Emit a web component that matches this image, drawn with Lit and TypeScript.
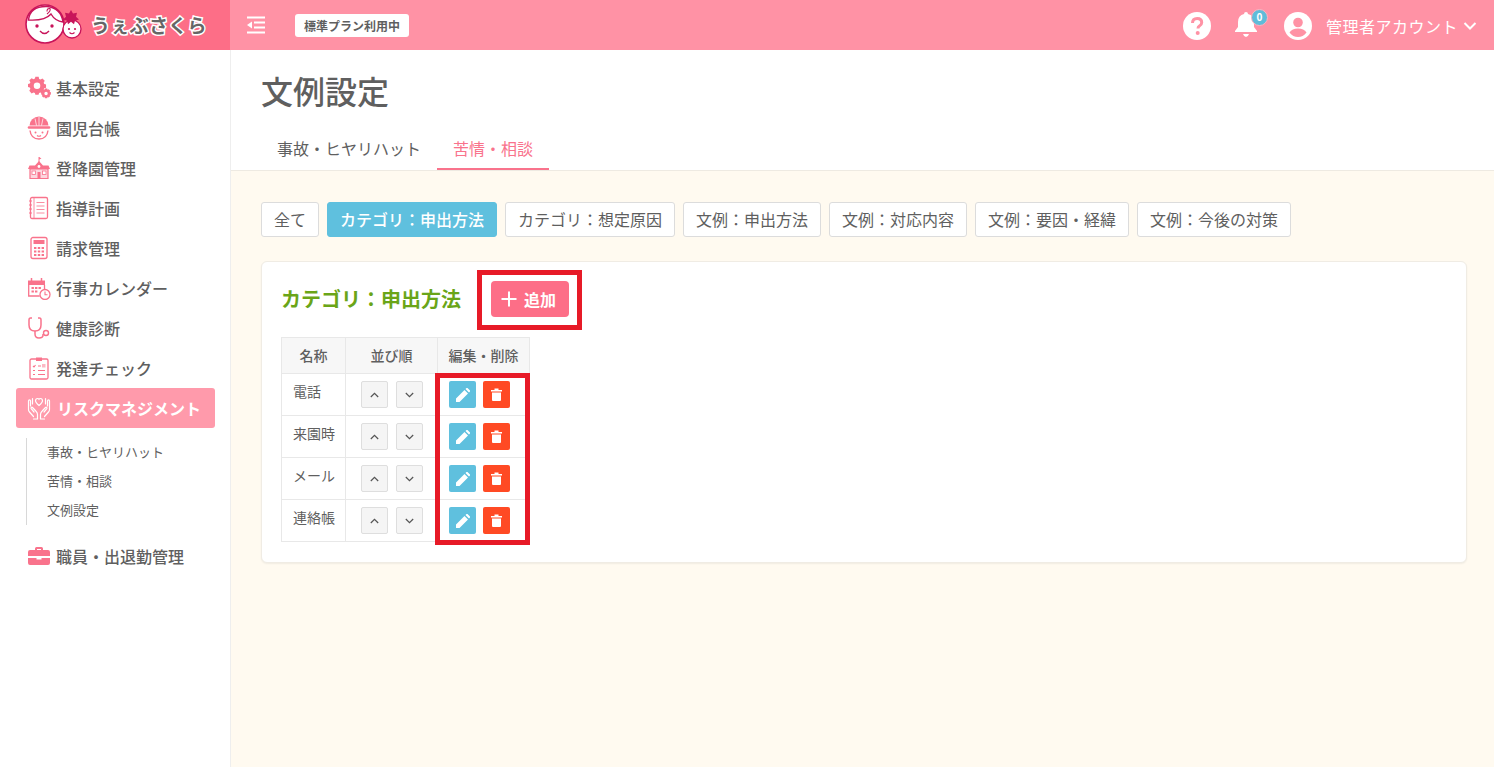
import { LitElement, html, css, svg } from "lit";
import { customElement } from "lit/decorators.js";

const P = "#f9738c";
const C = "\uFF1A";
const ic: Record<string, unknown> = {
  gear: svg`<path fill="${P}" fill-rule="evenodd" d="M9 1h4l.6 2.6 1.7.7L17.6 3l2.8 2.8-1.3 2.3.7 1.7 2.2.6v4l-2.3.6-.7 1.7 1.3 2.3-2.8 2.4-2.3-1.3-1.7.7-.6 2.2H9l-.6-2.2-1.7-.7-2.3 1.3L1.6 18l1.3-2.3-.7-1.7L0 13.4v-3.6l2.2-.6.7-1.7L1.6 5.2 4.4 2.6l2.3 1.3 1.7-.7L9 1zm2 7a4 4 0 100 8 4 4 0 000-8z" transform="translate(1 0) scale(.82)"/><path fill="${P}" fill-rule="evenodd" d="M18.2 15h2.6l.4 1.4 1.2-.7 1.8 1.8-.7 1.2 1.4.4v2.6l-1.4.4.7 1.2-1.8 1.8-1.2-.7-.4 1.4h-2.6l-.4-1.4-1.2.7-1.8-1.8.7-1.2-1.4-.4v-2.6l1.4-.4-.7-1.2 1.8-1.8 1.2.7zm1.3 3.6a1.9 1.9 0 100 3.8 1.9 1.9 0 000-3.8z" transform="translate(1.5 -1) scale(.9)"/>`,
  kid: svg`<path fill="${P}" d="M2.500 9.500a9.500 9 0 0119 0z"/><path d="M2 11.500h20" stroke="${P}" stroke-width="2.600" stroke-linecap="round"/><path d="M3 14.500Q4 23 12 23t9-8.500" fill="none" stroke="${P}" stroke-width="1.400"/><circle cx="8.500" cy="16.500" r="1" fill="${P}"/><circle cx="15.500" cy="16.500" r="1" fill="${P}"/><path d="M10 19.500q2 1.500 4 0" fill="none" stroke="${P}" stroke-width="1.200"/><path d="M12 1v8.500M8 2.500 9.500 9.500M16 2.500 14.500 9.500" stroke="#fff" stroke-width=".7"/>`,
  school: svg`<path d="M12 1v5" stroke="${P}" stroke-width="1"/><path fill="${P}" d="M12 1l2.500 1.500L12 3.500zM12 5l4 4.500h5.500L23 13H1l1.500-3.500H8z"/><path d="M3 13h18v9.500H3z" fill="#fdd6de" stroke="${P}" stroke-width="1.200"/><rect x="5" y="15" width="3.500" height="3.500" fill="#fff" stroke="${P}" stroke-width=".8"/><rect x="15.500" y="15" width="3.500" height="3.500" fill="#fff" stroke="${P}" stroke-width=".8"/><rect x="10.500" y="16" width="3" height="6.500" fill="${P}"/><circle cx="12" cy="10.500" r="1.400" fill="#fff"/>`,
  note: svg`<rect x="3.500" y="1.500" width="17" height="21" rx="1.500" fill="none" stroke="${P}" stroke-width="1.300"/><path d="M7 1.500v21M9.500 6.500h8M9.500 10h8M9.500 13.500h8M9.500 17h8" stroke="${P}" stroke-width="1" opacity=".8"/><path d="M2 5h3M2 9h3M2 13h3M2 17h3" stroke="${P}" stroke-width="1.200"/>`,
  calc: svg`<rect x="4" y="1.500" width="16" height="21" rx="2" fill="none" stroke="${P}" stroke-width="1.300"/><rect x="6.500" y="4" width="11" height="4" fill="${P}"/><path fill="${P}" d="M7 11h2.400v2H7zm3.800 0h2.400v2h-2.400zm3.800 0H17v2h-2.400zM7 14.500h2.400v2H7zm3.800 0h2.400v2h-2.400zm3.800 0H17v2h-2.400zM7 18h2.400v2H7zm3.800 0h2.400v2h-2.400zm3.800 0H17v2h-2.400z"/>`,
  cal: svg`<path fill="${P}" d="M1 4.500h17V9H1z"/><path d="M4.500 2v4M14.500 2v4" stroke="${P}" stroke-width="1.500"/><path d="M1.700 9v11h11" fill="none" stroke="${P}" stroke-width="1.300"/><path d="M17.500 9v4" stroke="${P}" stroke-width="1.300"/><path fill="${P}" d="M4.500 11h2.400v2H4.500zm3.500 0h2.400v2H8zm3.500 0h2.400v2h-2.400zM4.500 14.500h2.400v2H4.500zM8 14.500h2.400v2H8z"/><circle cx="18" cy="18.500" r="5" fill="#fff" stroke="${P}" stroke-width="1.300"/><path d="M18 15.500v3.200h2.500" fill="none" stroke="${P}" stroke-width="1.100"/>`,
  steth: svg`<path d="M5 2H3.500Q2 2 2 4v5q0 6 6 6t6-6V4q0-2-1.500-2H11" fill="none" stroke="${P}" stroke-width="1.500"/><path d="M8 15v3q0 4 4 4t4-3v-1" fill="none" stroke="${P}" stroke-width="1.500"/><circle cx="19" cy="17" r="2.500" fill="none" stroke="${P}" stroke-width="1.400"/>`,
  check: svg`<rect x="3" y="3" width="18" height="20" rx="1.500" fill="none" stroke="${P}" stroke-width="1.300"/><path fill="${P}" d="M9 1.500h6V5H9z"/><path d="M6 10l1 1 1.500-2M6 14.500h2M6 18.500h2M11 10h3M11 14.500h7M11 18.500h7" fill="none" stroke="${P}" stroke-width="1.100"/><rect x="15" y="8" width="3.500" height="3.500" fill="${P}" opacity=".5"/>`,
  hands: svg`<path d="M12 9.500C9.800 7.700 8.500 6.500 8.500 4.800 8.500 3.500 9.500 2.500 10.600 2.500c.6 0 1.100.3 1.400.8.300-.5.800-.8 1.400-.8 1.100 0 2.100 1 2.100 2.300 0 1.700-1.300 2.900-3.500 4.700z" fill="none" stroke="#fff" stroke-width="1.200"/><g fill="none" stroke="#fff" stroke-width="1.200" stroke-linejoin="round" stroke-linecap="round"><path d="M10.500 23v-4.500c0-1.500-.7-2.500-1.700-3.500L5.500 11.500c-.8-.8-2 .2-1.300 1.200L7 16M6.500 20.500 2.500 16c-.7-.7-1-1.500-1-2.500V5c0-1.500 2-1.500 2 0v5M6.500 23h4M5.500 8V2.500"/><path d="M13.500 23v-4.500c0-1.500.7-2.500 1.700-3.500l3.300-3.500c.8-.8 2 .2 1.300 1.200L17 16M17.500 20.500l4-4.500c.7-.7 1-1.500 1-2.500V5c0-1.500-2-1.500-2 0v5M17.500 23h-4M18.500 8V2.500"/></g>`,
  case: svg`<path fill="${P}" d="M8 6V4.500Q8 3 9.500 3h5Q16 3 16 4.500V6h5q2 0 2 2v4H1V8q0-2 2-2zm2 0h4V5h-4zM1 14h8.500v1.500h5V14H23v5q0 2-2 2H3q-2 0-2-2z"/>`,
};

const menu: [string, string][] = [
  ["gear", "基本設定"], ["kid", "園児台帳"], ["school", "登降園管理"], ["note", "指導計画"],
  ["calc", "請求管理"], ["cal", "行事カレンダー"], ["steth", "健康診断"], ["check", "発達チェック"],
];
const filters = ["全て", `カテゴリ${C}申出方法`, `カテゴリ${C}想定原因`, `文例${C}申出方法`, `文例${C}対応内容`, `文例${C}要因・経緯`, `文例${C}今後の対策`];
const rows = ["電話", "来園時", "メール", "連絡帳"];

@customElement("app-root")
export class AppRoot extends LitElement {
  static styles = css`
    :host { display: block; width: 1494px; height: 767px; overflow: hidden; background: #fff; color: #5f5f5f;
      font-family: "Noto Sans CJK JP", "Noto Sans", sans-serif; font-size: 16px; line-height: 1.5; }
    * { box-sizing: border-box; }
    svg { display: block; flex: none; }
    .top { height: 50px; display: flex; align-items: center; background: #ff92a5; color: #fff; }
    .brand { width: 230px; height: 50px; background: #fd6e87; display: flex; align-items: center; padding-left: 25px; gap: 4px; flex: none; }
    .logotext { font-size: 19px; font-weight: 700; letter-spacing: .3px; color: #666; -webkit-text-stroke: 3px #fff; paint-order: stroke fill; line-height: 50px; white-space: nowrap; }
    .toggle { margin-left: 15px; }
    .plan { margin: 1px 0 0 30px; background: #fff; color: #5f5f5f; font-size: 12px; font-weight: 700; height: 23px; line-height: 23px; padding: 0 9px; border-radius: 3px; }
    .right { margin-left: auto; display: flex; align-items: center; padding: 2px 17px 0 0; }
    .bell { position: relative; margin: -4px 0 0 22px; width: 26px; height: 28px; }
    .badge { position: absolute; left: 18px; top: -1px; width: 17px; height: 17px; border-radius: 50%; background: #5fbcd9; border: 1.500px solid #ffb3c0; color: #fff; font-size: 10px; font-weight: 700; line-height: 14px; text-align: center; }
    .avatar { margin-left: 25px; }
    .acct { margin-left: 14px; font-size: 16px; letter-spacing: .5px; color: #fff; white-space: nowrap; }
    .chev { margin-left: 5px; }
    .body { display: flex; height: 717px; }
    .side { width: 231px; flex: none; border-right: 1px solid #eeeeee; padding: 18px 15px 0 16px; }
    .item { height: 40px; display: flex; align-items: center; gap: 5px; padding-left: 11px; font-weight: 500; font-size: 16px; color: #5f5f5f; border-radius: 3px; }
    .item.on { background: #ff9aab; color: #fff; font-weight: 700; gap: 6px; }
    .sub { margin: 10px 0 11px 10px; border-left: 1px solid #d8d8d8; padding: 0 0 0 20px; height: 87px; font-size: 13px; font-weight: 400; display: flex; flex-direction: column; color: #5f5f5f; }
    .sub div { height: 29px; line-height: 27px; }
    .main { flex: 1; min-width: 0; display: flex; flex-direction: column; }
    .head { height: 121px; padding: 16px 0 0 30px; border-bottom: 1px solid #eeeae2; }
    h1 { margin: 0; font-size: 32px; font-weight: 500; line-height: 48px; color: #5f5f5f; }
    .tabs { display: flex; margin-top: 11px; }
    .tab { padding: 0 16px; height: 45px; line-height: 46px; border-bottom: 2px solid transparent; }
    .tab.on { color: #f9738c; border-color: #f9738c; }
    .content { flex: 1; background: #fffaf0; padding: 31px 27px 0 30px; }
    .filters { display: flex; gap: 8px; }
    .f { height: 35px; line-height: 33px; padding: 0 12px; background: #fff; border: 1px solid #dcdcdc; border-radius: 3px; white-space: nowrap; }
    .f.on { background: #5fc0de; border-color: #5fc0de; color: #fff; font-weight: 500; }
    .card { margin-top: 24px; background: #fff; height: 302px; width: 1206px; border-radius: 6px; border: 1px solid #f0ece4; box-shadow: 0 1px 2px rgba(0,0,0,.06); padding: 8px 19px 0; }
    .title { display: flex; align-items: center; }
    h2 { margin: 0 0 2px; font-size: 20px; font-weight: 700; color: #6aa518; line-height: 30px; white-space: nowrap; }
    .mark { border: 5px solid #e71a27; }
    .addwrap { margin-left: 16px; padding: 6px 8px 8px 9px; }
    .add { width: 78px; height: 36px; border-radius: 4px; background: #fd6e87; color: #fff; font-weight: 700; font-size: 16px; display: flex; align-items: center; padding-left: 10px; gap: 7px; white-space: nowrap; }
    .tablewrap { position: relative; width: 249px; margin-top: 7px; }
    table { border-collapse: collapse; table-layout: fixed; width: 248px; font-size: 14px; }
    th, td { border: 1px solid #e8e8e8; padding: 0; }
    th { height: 36px; background: #f7f7f7; font-weight: 500; text-align: center; }
    td { height: 42px; }
    td.n { padding: 0 0 7px 11px; white-space: nowrap; }
    .acts { display: flex; justify-content: center; gap: 8px; }
    .acts.e { justify-content: flex-start; padding-left: 11px; gap: 7px; }
    .b { width: 27px; height: 27px; border-radius: 2px; display: flex; align-items: center; justify-content: center; }
    .s { background: #f5f5f5; border: 1px solid #dedede; }
    .ed { background: #5fc0de; }
    .del { background: #ff4a24; }
    .over { position: absolute; left: 154px; top: 36px; width: 95px; height: 172px; pointer-events: none; }
  `;

  private icon(name: string) {
    return html`<svg width="24" height="24" viewBox="0 0 24 24" class="mi">${ic[name]}</svg>`;
  }

  render() {
    return html`
      <div class="top">
        <div class="brand">
          <svg width="62" height="46" viewBox="0 0 62 46">
            <circle cx="20" cy="22" r="19" fill="#fff" stroke="#c8145a" stroke-width="1.600"/>
            <path d="M3.500 18Q5 4 22 4.500 36 6 38 20q-8-1-12-8-6 7-22.500 6z" fill="#fff" stroke="#c8145a" stroke-width="1.400"/>
            <path d="M22 12q4-3 3-5.500-3-.5-3 3" fill="none" stroke="#c8145a" stroke-width="1.100"/>
            <circle cx="12" cy="24" r="1.700" fill="#c8145a"/><circle cx="27" cy="24" r="1.700" fill="#c8145a"/>
            <path d="M15 29q4.500 5 9 0" fill="none" stroke="#c8145a" stroke-width="1.400"/>
            <circle cx="47" cy="27" r="9" fill="#fff" stroke="#c8145a" stroke-width="1.300"/>
            <circle cx="44" cy="27" r="1.100" fill="#c8145a"/><circle cx="50" cy="27" r="1.100" fill="#c8145a"/>
            <path d="M44.500 30.500q2.500 2.500 5 0" fill="none" stroke="#c8145a" stroke-width="1.100"/>
            <path fill="#c8145a" d="M46 8l2 3.500 4-.8-1 4 3 2.800-4 1.200-1 3.500-3-2.500-3 2.500-1-3.500-4-1.200 3-2.800-1-4 4 .8z"/>
          </svg>
          <span class="logotext">うぇぶさくら</span>
        </div>
        <svg class="toggle" width="20" height="20" viewBox="0 0 20 20"><path d="M2 2h18M9 7h11M9 12h11M2 17h18" stroke="#fff" stroke-width="2" transform="translate(0 .5)"/><path d="M7 6.500v7l-5-3.500z" fill="#fff"/></svg>
        <div class="plan">標準プラン利用中</div>
        <div class="right">
          <svg width="28" height="28" viewBox="0 0 28 28"><circle cx="14" cy="14" r="14" fill="#fff"/><path d="M9.500 11q0-4.500 4.700-4.500 4.500 0 4.500 4 0 2.200-2.300 3.500-1.400.8-1.400 2.500" fill="none" stroke="#ff92a5" stroke-width="3"/><circle cx="14.700" cy="21" r="2" fill="#ff92a5"/></svg>
          <div class="bell">
            <svg width="26" height="28" viewBox="0 0 26 28"><path fill="#fff" d="M13 2q2 0 2 2 6 1.500 6 8v5l3 4v1H2v-1l3-4v-5q0-6.500 6-8 0-2 2-2zM10 24h6q-1 3-3 3t-3-3z"/></svg>
            <div class="badge">0</div>
          </div>
          <svg class="avatar" width="28" height="28" viewBox="0 0 28 28"><circle cx="14" cy="14" r="14" fill="#fff"/><circle cx="14" cy="10.500" r="4.800" fill="#ff92a5"/><path d="M5.500 20.500Q8 16.500 14 16.500t8.500 4Q19 25 14 25t-8.500-4.500z" fill="#ff92a5"/></svg>
          <span class="acct">管理者アカウント</span>
          <svg class="chev" width="14" height="10" viewBox="0 0 14 10"><path d="M1.500 2 7 7.500 12.500 2" fill="none" stroke="#fff" stroke-width="2"/></svg>
        </div>
      </div>
      <div class="body">
        <nav class="side">
          ${menu.map(([i, t]) => html`<div class="item">${this.icon(i)}<span>${t}</span></div>`)}
          <div class="item on">${this.icon("hands")}<span>リスクマネジメント</span></div>
          <div class="sub"><div>事故・ヒヤリハット</div><div>苦情・相談</div><div>文例設定</div></div>
          <div class="item">${this.icon("case")}<span>職員・出退勤管理</span></div>
        </nav>
        <main class="main">
          <div class="head">
            <h1>文例設定</h1>
            <div class="tabs"><div class="tab">事故・ヒヤリハット</div><div class="tab on">苦情・相談</div></div>
          </div>
          <div class="content">
            <div class="filters">${filters.map((f, i) => html`<div class="f ${i === 1 ? "on" : ""}">${f}</div>`)}</div>
            <div class="card">
              <div class="title">
                <h2>カテゴリ${C}申出方法</h2>
                <div class="mark addwrap"><div class="add">
                  <svg width="16" height="16" viewBox="0 0 16 16"><path d="M8 .5v15M.5 8h15" stroke="#fff" stroke-width="2"/></svg>追加</div></div>
              </div>
              <div class="tablewrap">
                <table>
                  <colgroup><col style="width:64px"/><col style="width:92px"/><col style="width:92px"/></colgroup>
                  <tr><th>名称</th><th>並び順</th><th>編集・削除</th></tr>
                  ${rows.map((r) => html`<tr>
                    <td class="n">${r}</td>
                    <td><div class="acts">
                      <div class="b s"><svg width="9" height="6" viewBox="0 0 11 7"><path d="M1 6l4.500-4.500L10 6" fill="none" stroke="#555" stroke-width="1.500"/></svg></div>
                      <div class="b s"><svg width="9" height="6" viewBox="0 0 11 7"><path d="M1 1l4.500 4.500L10 1" fill="none" stroke="#555" stroke-width="1.500"/></svg></div>
                    </div></td>
                    <td><div class="acts e">
                      <div class="b ed"><svg width="14" height="14" viewBox="0 0 14 14"><path fill="#fff" d="M0 14v-3.500L8.500 2 12 5.500 3.500 14zM9.500 1l1-1q.5-.5 1 0l2.500 2.500q.5.500 0 1l-1 1z"/></svg></div>
                      <div class="b del"><svg width="11" height="13" viewBox="0 0 11 13"><path fill="#fff" d="M0 2h3.500V.5h4V2H11v1.500H0zM1 4.500h9V12q0 1-1 1H2q-1 0-1-1z"/></svg></div>
                    </div></td>
                  </tr>`)}
                </table>
                <div class="mark over"></div>
              </div>
            </div>
          </div>
        </main>
      </div>
    `;
  }
}
